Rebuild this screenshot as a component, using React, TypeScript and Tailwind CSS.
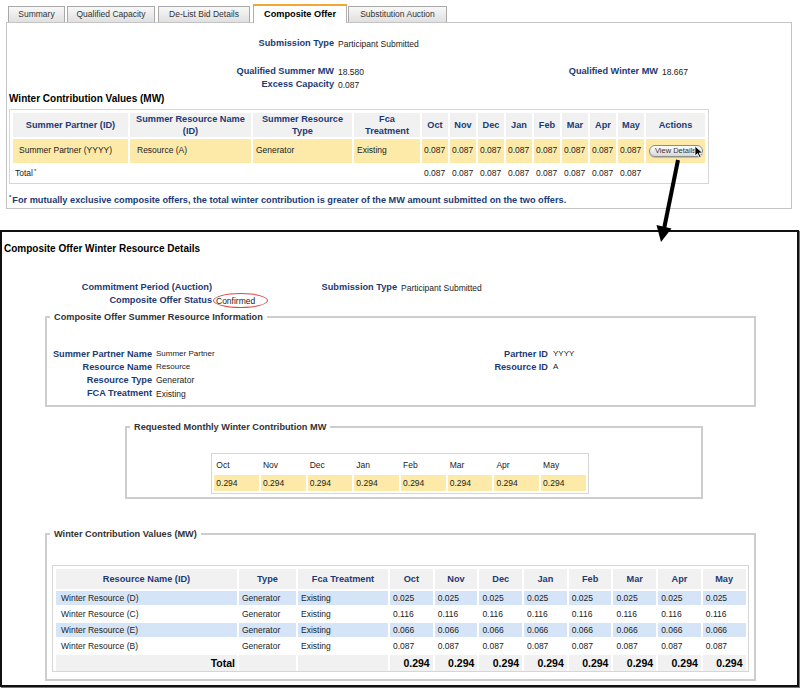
import React from "react";

const months = ["Oct", "Nov", "Dec", "Jan", "Feb", "Mar", "Apr", "May"];

const label = "font-bold text-[#1c3b75] text-[9.2px] whitespace-nowrap";
const val = "text-[8.5px] text-[#222] whitespace-nowrap";
const head = "bg-[#f1f1f1] flex items-center justify-center text-center font-bold text-[#1c3b75] text-[9.2px] leading-[12px]";

const tabs = [
  { name: "Summary", w: "w-[57px]", ml: "ml-0" },
  { name: "Qualified Capacity", w: "w-[88px]", ml: "ml-[2px]" },
  { name: "De-List Bid Details", w: "w-[92px]", ml: "ml-[3px]" },
  { name: "Composite Offer", w: "w-[94px]", ml: "ml-[3px]", active: true },
  { name: "Substitution Auction", w: "w-[99px]", ml: "ml-[1px]" },
];

const winterRows = [
  { name: "Winter Resource (D)", v: "0.025", blue: true },
  { name: "Winter Resource (C)", v: "0.116", blue: false },
  { name: "Winter Resource (E)", v: "0.066", blue: true },
  { name: "Winter Resource (B)", v: "0.087", blue: false },
];

function Tabs() {
  return (
    <div className="flex h-[22px] items-end pl-[8px]">
      {tabs.map((t) =>
        t.active ? (
          <div
            key={t.name}
            className={`relative z-10 -mb-px flex h-[19px] items-center justify-center border-x border-t-2 border-x-[#b0b0b0] border-t-[#f3a634] bg-white text-[9.2px] font-bold text-black ${t.w} ${t.ml}`}
          >
            {t.name}
          </div>
        ) : (
          <div
            key={t.name}
            className={`flex h-[16px] items-center justify-center border border-b-0 border-[#a9a9a9] bg-linear-to-b from-[#f8f8f8] to-[#e0e0e0] text-[8.5px] text-[#333] ${t.w} ${t.ml}`}
          >
            {t.name}
          </div>
        )
      )}
    </div>
  );
}

function Cursor() {
  return (
    <svg className="pointer-events-none absolute left-[694px] top-[145px]" width="10" height="14" viewBox="0 0 10 14">
      <path d="M1 1 L1 11 L3.5 8.6 L5.4 12.6 L7 11.9 L5.2 8 L8.6 8 Z" fill="#000" stroke="#fff" strokeWidth="0.8" />
    </svg>
  );
}

function TopPanel() {
  return (
    <div className="ml-[6px] h-[187px] w-[786px] border border-[#c4c4c4] pt-[14.5px]">
      <div className="flex h-[13px] items-center">
        <div className={`w-[327px] text-right ${label}`}>Submission Type</div>
        <div className={`ml-[4px] ${val}`}>Participant Submitted</div>
      </div>
      <div className="mt-[15px] flex h-[13px] items-center">
        <div className={`w-[327px] text-right ${label}`}>Qualified Summer MW</div>
        <div className={`ml-[4px] w-[80px] ${val}`}>18.580</div>
        <div className={`w-[240px] text-right ${label}`}>Qualified Winter MW</div>
        <div className={`ml-[4px] ${val}`}>18.667</div>
      </div>
      <div className="flex h-[13px] items-center">
        <div className={`w-[327px] text-right ${label}`}>Excess Capacity</div>
        <div className={`ml-[4px] ${val}`}>0.087</div>
      </div>
      <div className="mt-[1px] flex h-[13px] items-center pl-[2px] text-[10px] font-bold text-black">
        Winter Contribution Values (MW)
      </div>
      <div className="ml-[2px] mt-[3.5px] w-[700px] border border-[#d6d6d6] pl-[3px] pt-[2.7px]">
        <div className="relative grid grid-cols-[115px_121px_99px_66px_repeat(8,26px)_59px] gap-[2px]">
          <div className={`h-[24px] ${head}`}>Summer Partner (ID)</div>
          <div className={`h-[24px] ${head}`}>
            Summer Resource Name
            <br />
            (ID)
          </div>
          <div className={`h-[24px] ${head}`}>
            Summer Resource
            <br />
            Type
          </div>
          <div className={`h-[24px] ${head}`}>
            Fca
            <br />
            Treatment
          </div>
          {months.map((m) => (
            <div key={m} className={`h-[24px] ${head}`}>
              {m}
            </div>
          ))}
          <div className={`h-[24px] ${head}`}>Actions</div>

          <div className={`flex h-[24px] items-center bg-[#fdeaa8] pl-[6px] ${val}`}>Summer Partner (YYYY)</div>
          <div className={`flex h-[24px] items-center bg-[#fdeaa8] pl-[7px] ${val}`}>Resource (A)</div>
          <div className={`flex h-[24px] items-center bg-[#fdeaa8] pl-[3px] ${val}`}>Generator</div>
          <div className={`flex h-[24px] items-center bg-[#fdeaa8] pl-[3px] ${val}`}>Existing</div>
          {months.map((m) => (
            <div key={m} className={`flex h-[24px] items-center bg-[#fdeaa8] pl-[2px] ${val}`}>
              0.087
            </div>
          ))}
          <div className="flex h-[24px] items-center justify-center bg-[#fdeaa8]">
            <button className="flex h-[12px] w-[54px] items-center justify-center whitespace-nowrap rounded-full border border-[#8c8c8c] bg-linear-to-b from-white to-[#d8d8d8] text-[7.5px] leading-none text-[#333] shadow-[0_1px_1px_#bbb]">
              View Details
            </button>
          </div>

          <div className={`flex h-[18px] items-center pl-[2px] ${val}`}>
            Total<sup className="ml-px text-[6px]">*</sup>
          </div>
          <div className="h-[18px]" />
          <div className="h-[18px]" />
          <div className="h-[18px]" />
          {months.map((m) => (
            <div key={m} className={`flex h-[18px] items-center pl-[2px] ${val}`}>
              0.087
            </div>
          ))}
          <div className="h-[18px]" />
        </div>
      </div>
      <div className="mt-[10px] flex h-[13px] items-center pl-[2px] text-[9.2px] font-bold text-[#1c3b75] whitespace-nowrap">
        <sup className="mr-px text-[6px]">*</sup>
        For mutually exclusive composite offers, the total winter contribution is greater of the MW amount submitted on the two offers.
      </div>
    </div>
  );
}

function Legend({ children }: { children: React.ReactNode }) {
  return (
    <legend className="ml-[3px] px-[4px] text-[9.2px] font-bold leading-[12px] text-[#333]">{children}</legend>
  );
}

function DetailsPanel() {
  return (
    <div className="mt-[21px] h-[457px] w-[799px] border-2 border-[#111] shadow-[1px_1px_1px_#777]">
      <div className="mt-[10px] flex h-[14px] items-center pl-[2px] text-[10px] font-bold text-black">
        Composite Offer Winter Resource Details
      </div>

      <div className="mt-[25.5px] flex h-[13px] items-center">
        <div className={`w-[210px] text-right ${label}`}>Commitment Period (Auction)</div>
        <div className={`w-[185px] text-right ${label}`}>Submission Type</div>
        <div className={`ml-[4px] ${val}`}>Participant Submitted</div>
      </div>
      <div className="flex h-[13px] items-center">
        <div className={`w-[210px] text-right ${label}`}>Composite Offer Status</div>
        <div className={`relative ml-[4px] ${val}`}>
          Confirmed
          <span className="absolute -left-[3px] -top-[4px] h-[15px] w-[55px] rounded-[50%] border border-[#e04848]" />
        </div>
      </div>

      <fieldset className="ml-[43px] mt-[3.5px] h-[96px] w-[711px] border-2 border-[#cdcdcd]">
        <Legend>Composite Offer Summer Resource Information</Legend>
        <div className="mt-[24.5px] flex h-[13.3px] items-center">
          <div className={`w-[105px] text-right ${label}`}>Summer Partner Name</div>
          <div className={`w-[291px] pl-[4px] text-[8px] text-[#222]`}>Summer Partner</div>
          <div className={`w-[105px] text-right ${label}`}>Partner ID</div>
          <div className="pl-[5px] text-[8px] text-[#222]">YYYY</div>
        </div>
        <div className="flex h-[13.3px] items-center">
          <div className={`w-[105px] text-right ${label}`}>Resource Name</div>
          <div className={`w-[291px] pl-[4px] text-[8px] text-[#222]`}>Resource</div>
          <div className={`w-[105px] text-right ${label}`}>Resource ID</div>
          <div className="pl-[5px] text-[8px] text-[#222]">A</div>
        </div>
        <div className="flex h-[13.3px] items-center">
          <div className={`w-[105px] text-right ${label}`}>Resource Type</div>
          <div className={`pl-[4px] ${val}`}>Generator</div>
        </div>
        <div className="flex h-[13.3px] items-center">
          <div className={`w-[105px] text-right ${label}`}>FCA Treatment</div>
          <div className={`pl-[4px] ${val}`}>Existing</div>
        </div>
      </fieldset>

      <fieldset className="ml-[123px] mt-[14px] h-[78px] w-[578px] border-2 border-[#cdcdcd]">
        <Legend>Requested Monthly Winter Contribution MW</Legend>
        <div className="ml-[84px] mt-[20px] w-[378px] border border-[#d6d6d6] pb-[2px] pl-[2.3px] pt-[3px]">
          <div className="grid grid-cols-[repeat(8,44.7px)] gap-x-[2px] gap-y-[2px]">
            {months.map((m) => (
              <div key={m} className={`flex h-[16px] items-center pl-[2px] ${val}`}>
                {m}
              </div>
            ))}
            {months.map((m) => (
              <div key={m} className={`flex h-[16px] items-center bg-[#fdeaa8] pl-[2px] ${val}`}>
                0.294
              </div>
            ))}
          </div>
        </div>
      </fieldset>

      <fieldset className="ml-[43px] mt-[29px] h-[153px] w-[711px] border-2 border-[#cdcdcd]">
        <Legend>Winter Contribution Values (MW)</Legend>
        <div className="ml-[5px] mt-[25px] w-[697px] border border-[#d6d6d6] pl-[3px] pt-[3px]">
          <div className="grid grid-cols-[181px_57px_90px_repeat(8,42.7px)] gap-[2px]">
            <div className={`h-[20px] ${head}`}>Resource Name (ID)</div>
            <div className={`h-[20px] ${head}`}>Type</div>
            <div className={`h-[20px] ${head}`}>Fca Treatment</div>
            {months.map((m) => (
              <div key={m} className={`h-[20px] ${head}`}>
                {m}
              </div>
            ))}
            {winterRows.map((r) => {
              const bg = r.blue ? "bg-[#d5e5f7]" : "bg-white";
              return (
                <React.Fragment key={r.name}>
                  <div className={`flex h-[14px] items-center pl-[5px] ${bg} ${val}`}>{r.name}</div>
                  <div className={`flex h-[14px] items-center pl-[3px] ${bg} ${val}`}>Generator</div>
                  <div className={`flex h-[14px] items-center pl-[3px] ${bg} ${val}`}>Existing</div>
                  {months.map((m) => (
                    <div key={m} className={`flex h-[14px] items-center pl-[3px] ${bg} ${val}`}>
                      {r.v}
                    </div>
                  ))}
                </React.Fragment>
              );
            })}
            <div className="flex h-[16px] items-center justify-end bg-[#f1f1f1] pr-[2px] text-[10.5px] font-bold text-black">
              Total
            </div>
            <div className="h-[16px] bg-[#f1f1f1]" />
            <div className="h-[16px] bg-[#f1f1f1]" />
            {months.map((m) => (
              <div key={m} className="flex h-[16px] items-center justify-end bg-[#f1f1f1] pr-[3px] text-[10.5px] font-bold text-black">
                0.294
              </div>
            ))}
          </div>
        </div>
      </fieldset>
    </div>
  );
}

function Arrow() {
  return (
    <svg className="pointer-events-none absolute left-0 top-0" width="800" height="688" viewBox="0 0 800 688">
      <line x1="678" y1="160" x2="664" y2="229" stroke="#000" strokeWidth="4" />
      <polygon points="656.5,225 671.5,228.5 661,242" fill="#000" />
    </svg>
  );
}

export default function App() {
  return (
    <div className="relative h-[688px] w-[800px] overflow-hidden bg-white font-['Liberation_Sans',Arial,sans-serif] leading-none">
      <Tabs />
      <TopPanel />
      <DetailsPanel />
      <Arrow />
      <Cursor />
    </div>
  );
}
